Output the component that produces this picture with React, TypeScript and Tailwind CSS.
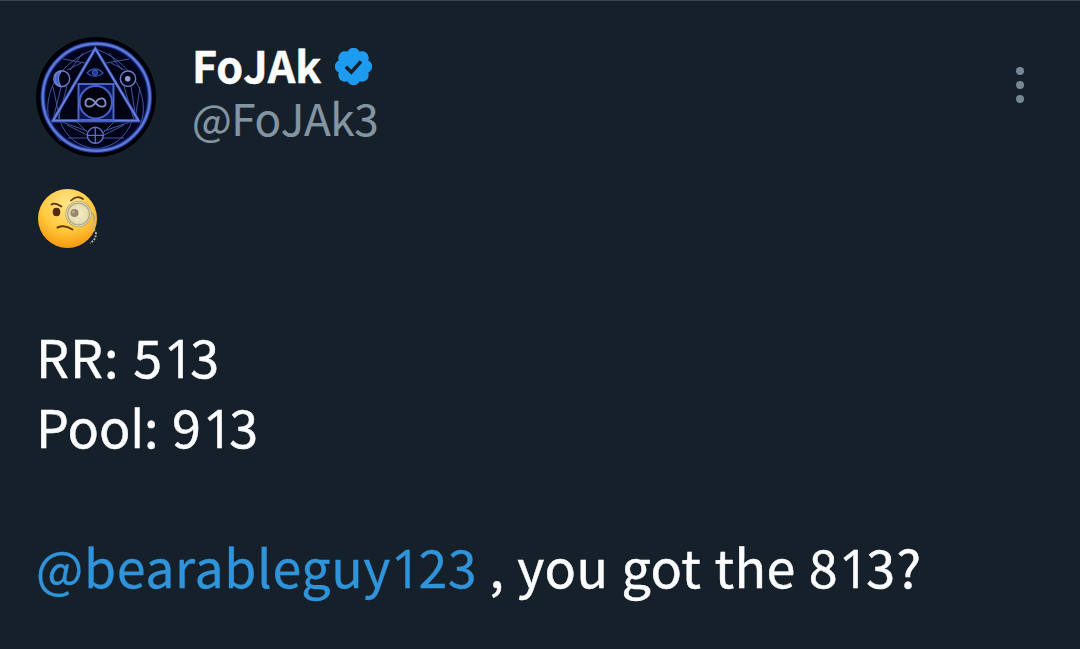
import { type ReactNode } from "react";
import { clsx } from "clsx";

function Avatar() {
  return (
    <svg viewBox="0 0 120 120" className="size-[120px] shrink-0" fill="none">
      <defs>
        <radialGradient id="disc">
          <stop offset="0" stopColor="#02030f" />
          <stop offset="0.8" stopColor="#02041a" />
          <stop offset="0.86" stopColor="#050b38" />
          <stop offset="0.95" stopColor="#010108" />
        </radialGradient>
      </defs>
      <circle cx="60" cy="60" r="60" fill="url(#disc)" />
      <g stroke="#4a5ca6" strokeWidth="0.9">
        <path d="M59 12C38 20 18 36 13 60s6 38 12 44M60 12c22 8 41 26 46 48s-5 36-12 44" />
        <path d="M27 22l22 4M93 22L70 26M34 33L47 16M86 33L73 16M31 33l14-7M89 33l-14-7" />
        <path d="M17 50l7 33M25 50l-8 33M31 49L22 83M95 49l5 34M88 49l10 34M104 50l-5 33" />
        <path d="M24 84c6 16 18 26 36 28M96 84c-6 16-18 26-36 28M31 88l20 10M88 88L68 98M26 85l25 9M94 85l-26 9" />
        <path d="M32 101h20M67 101h21M40 84l12 12M79 84L67 96" />
      </g>
      <circle cx="60.3" cy="60.3" r="53.5" stroke="#1d3699" strokeWidth="4.5" />
      <circle cx="60.3" cy="60.3" r="53.5" stroke="#6079cf" strokeWidth="2.4" />
      <path d="M59.3 11.5L17 83.7h85.5z" stroke="#2440a8" strokeWidth="3.4" />
      <path d="M59.3 11.5L17 83.7h85.5z" stroke="#6c82d4" strokeWidth="1.8" />
      <path d="M42.5 47h35v36h-35z" fill="#0a1550" stroke="#4d65c4" strokeWidth="2" />
      <circle cx="59.8" cy="65.2" r="16.2" fill="#01020d" stroke="#4762cc" strokeWidth="2" />
      <path
        d="M59.5 65.5c-3-4-9-6-10 0s7 5 10 0 9-6 10 0-7 5-10 0z"
        stroke="#8390c8"
        strokeWidth="1.8"
      />
      <path d="M51 36q8-8 16 0q-8 7-16 0z" stroke="#2f4dad" strokeWidth="1.2" />
      <circle cx="59" cy="35.7" r="2.6" fill="#1b3599" stroke="#4a66bc" />
      <circle cx="25.7" cy="41.7" r="8" stroke="#6f7fc2" strokeWidth="1.4" />
      <path d="M25 34a8 8 0 0 0 0 15.5q-5-7.5 0-15.5z" fill="#4263cf" stroke="#8190d2" />
      <circle cx="92" cy="41.7" r="7.7" fill="#03051a" stroke="#6f7fc2" strokeWidth="1.4" />
      <circle cx="91.7" cy="41.7" r="2.8" fill="#929dcf" />
      <circle cx="59.3" cy="98.3" r="8" fill="#03051a" stroke="#5b70c4" strokeWidth="1.4" />
      <path d="M59.3 90v16.5M51 98.3h16.5" stroke="#5b70c4" strokeWidth="1.3" />
    </svg>
  );
}

function VerifiedBadge() {
  return (
    <svg viewBox="1.9 1.9 20.2 20.2" className="size-[37px]">
      <path
        fill="#1d9bf0"
        d="M22.25 12c0-1.43-.88-2.67-2.19-3.34.46-1.39.2-2.9-.81-3.91s-2.52-1.27-3.91-.81c-.66-1.31-1.91-2.19-3.34-2.19s-2.67.88-3.33 2.19c-1.4-.46-2.91-.2-3.92.81s-1.26 2.52-.8 3.91c-1.31.67-2.2 1.91-2.2 3.34s.89 2.67 2.2 3.34c-.46 1.39-.21 2.9.8 3.91s2.52 1.26 3.91.81c.67 1.31 1.91 2.19 3.34 2.19s2.68-.88 3.34-2.19c1.39.45 2.9.2 3.91-.81s1.27-2.52.81-3.91c1.31-.67 2.19-1.91 2.19-3.34z"
      />
      <path d="M7.8 12.1l3 3 5.3-5.9" fill="none" stroke="#16202a" strokeWidth="1.9" />
    </svg>
  );
}

function MonocleFace() {
  return (
    <svg viewBox="0 0 60 60" className="size-[60px]" fill="none">
      <defs>
        <radialGradient id="face" cx="0.5" cy="0.25" r="0.78">
          <stop offset="0" stopColor="#ffe58a" />
          <stop offset="0.55" stopColor="#ffcb3f" />
          <stop offset="1" stopColor="#f6950a" />
        </radialGradient>
        <radialGradient id="lens">
          <stop offset="0" stopColor="#f0e9c6" />
          <stop offset="0.7" stopColor="#e9e1b5" />
          <stop offset="1" stopColor="#d2c792" />
        </radialGradient>
      </defs>
      <circle cx="29.5" cy="29.5" r="29.5" fill="url(#face)" />
      <path d="M13.5 15.5q3-2.5 10 2" stroke="#5b3210" strokeWidth="1.7" strokeLinecap="round" />
      <path d="M33 11.500q6-6 12-1.500" stroke="#5b3210" strokeWidth="1.7" strokeLinecap="round" />
      <ellipse cx="18.5" cy="23" rx="3.8" ry="4.200" fill="#542b10" />
      <path d="M19.5 38.500q7-3.500 15 2" stroke="#643508" strokeWidth="2" strokeLinecap="round" />
      <circle cx="40.500" cy="25" r="11.800" fill="url(#lens)" stroke="#aaa17d" strokeWidth="2.600" />
      <circle cx="40.500" cy="25" r="12" stroke="#e9e2c4" strokeWidth="1" />
      <circle cx="36.500" cy="24" r="4" fill="#96866c" />
      <circle cx="35.500" cy="23" r="1.500" fill="#b9aa8a" />
      <path d="M53 23.500q4 2 3 8" stroke="#b8a878" strokeWidth="1.800" />
      <path d="M56 31q-3 8 2 13q0 7-6 10" stroke="#b9b8ab" strokeWidth="1.800" strokeDasharray="2 1.200" />
    </svg>
  );
}

// Glyphs whose shape differs from the body face
function Alt({ children, className }: { children: ReactNode; className?: string }) {
  return (
    <span className={clsx("font-['Open_Sans',sans-serif] text-[53px] tracking-normal", className)}>
      {children}
    </span>
  );
}

export default function App() {
  return (
    <article className="h-[649px] w-[1080px] overflow-hidden border-t border-[#38444d] bg-[#16202a] px-9 pt-9 font-['Noto_Sans_CJK_SC',sans-serif] text-[#fbfcfd] [-webkit-text-stroke:0.5px]">
      <header className="flex h-[120px]">
        <Avatar />
        <div className="flex flex-1 flex-col pl-9">
          <div className="flex h-[54px] items-center">
            <span className="text-[43px] leading-[54px] font-bold">FoJAk</span>
            <span className="mt-1 ml-3.5">
              <VerifiedBadge />
            </span>
          </div>
          <span className="text-[44px] leading-[52px] tracking-[-0.4px] text-[#8495a2] [-webkit-text-stroke:0.2px]">
            <span className="text-[42px]">@</span>FoJAk3
          </span>
        </div>
        <button aria-label="More" className="mt-[30px] mr-5 flex h-9 w-2 flex-col justify-between">
          <span className="size-2 rounded-full bg-[#788795]" />
          <span className="size-2 rounded-full bg-[#788795]" />
          <span className="size-2 rounded-full bg-[#788795]" />
        </button>
      </header>

      <div className="mt-6 text-[52px] leading-[70px] whitespace-nowrap">
        <div className="flex h-[70px] items-center pt-[5px] pl-0.5">
          <MonocleFace />
        </div>
        <div className="h-[70px]" />
        <p className="h-[70px]">
          <span className="tracking-[1px] [word-spacing:1px]">RR: </span>5
          <Alt className="-mr-1 ml-0.5">1</Alt>3
        </p>
        <p className="h-[70px] [word-spacing:2px]">
          Poo<Alt>l</Alt>: 9<Alt className="-mr-1 ml-0.5">1</Alt>3
        </p>
        <div className="h-[70px]" />
        <p className="h-[70px] tracking-[0.4px]">
          <a className="tracking-[0.6px] text-[#3094db] [-webkit-text-stroke:0.3px]">
            <span className="text-[50px]">@</span>bearableguy
            <Alt className="-mr-[3px]">1</Alt>23
          </a>{" "}
          <span className="[word-spacing:1px]">
            , you got the 8<Alt className="-mr-[3px] ml-px">1</Alt>3<span className="ml-px">?</span>
          </span>
        </p>
      </div>
    </article>
  );
}
